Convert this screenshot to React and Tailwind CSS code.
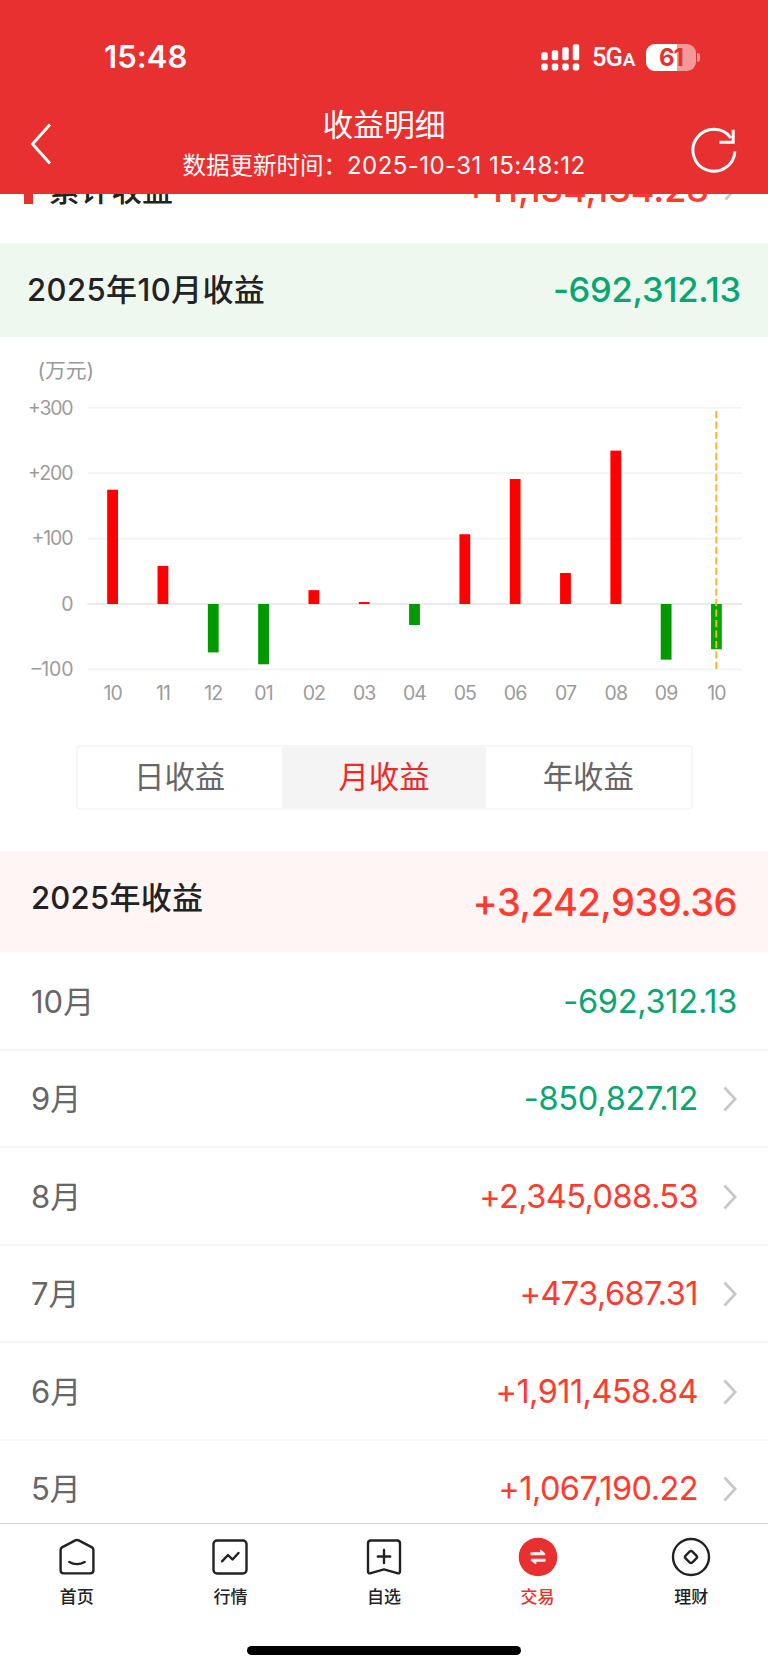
const BARS = [
  { label: '10', value: 174.8 },
  { label: '11', value: 58.2 },
  { label: '12', value: -74 },
  { label: '01', value: -92.2 },
  { label: '02', value: 21.2 },
  { label: '03', value: 3 },
  { label: '04', value: -32.1 },
  { label: '05', value: 106.7 },
  { label: '06', value: 191.1 },
  { label: '07', value: 47.4 },
  { label: '08', value: 234.5 },
  { label: '09', value: -85.1 },
  { label: '10', value: -69.2 },
]

const TICKS = [
  { label: '+300', value: 300, length: 45.5 },
  { label: '+200', value: 200, length: 45.5 },
  { label: '+100', value: 100, length: 42 },
  { label: '0', value: 0, length: 11.5 },
  { label: '–100', value: -100, length: 42 },
]

const MONTHS = [
  { month: '10月', amount: '-692,312.13', link: false },
  { month: '9月', amount: '-850,827.12', link: true },
  { month: '8月', amount: '+2,345,088.53', link: true },
  { month: '7月', amount: '+473,687.31', link: true },
  { month: '6月', amount: '+1,911,458.84', link: true },
  { month: '5月', amount: '+1,067,190.22', link: true },
]

const TABS = ['日收益', '月收益', '年收益']

function Chevron({ className = '' }) {
  return (
    <svg viewBox="0 0 14 26" className={`w-[14px] h-[26px] shrink-0 ${className}`} fill="none" stroke="#c8c8c8" strokeWidth="2.8">
      <path d="M1.5 1.5 L12.2 13 L1.5 24.5" />
    </svg>
  )
}

function StatusBar() {
  return (
    <div className="h-[102px] pt-[40px] pl-[104px] pr-[68px] flex items-start justify-between">
      <span className="text-[31px] leading-[34px] font-semibold tracking-[0.1px]">15:48</span>
      <div className="flex items-center pt-[2px]">
        <svg viewBox="0 0 39 27" className="w-[39px] h-[27px]" fill="#fff">
          <rect x="0.3" y="8.2" width="6.4" height="8" rx="1.8" />
          <rect x="10.8" y="6.2" width="6.4" height="10" rx="1.8" />
          <rect x="21.3" y="3.3" width="6.4" height="12.9" rx="1.8" />
          <rect x="31.8" y="0.2" width="6.4" height="16" rx="1.8" />
          <rect x="0.3" y="19.5" width="6.4" height="6.9" rx="1.8" />
          <rect x="10.8" y="19.5" width="6.4" height="6.9" rx="1.8" />
          <rect x="21.3" y="19.5" width="6.4" height="6.9" rx="1.8" />
          <rect x="31.8" y="19.5" width="6.4" height="6.9" rx="1.8" />
        </svg>
        <span className="ml-[12px] pt-[2px] w-[54px] flex items-baseline font-[Roboto] font-medium leading-[27px]">
          <span className="text-[25.5px] tracking-[-1.1px]">5G</span>
          <span className="ml-[1px] text-[19px] font-semibold">A</span>
        </span>
        <span className="relative w-[50px] h-[27px] rounded-[9px] overflow-hidden bg-white/50 flex items-center justify-center">
          <span className="absolute left-0 top-0 w-[31px] h-full bg-white" />
          <span className="relative text-[24px] leading-[27px] font-bold tracking-[-1px] text-[#e93030]">61</span>
        </span>
        <span className="ml-[1px] w-[3px] h-[9px] rounded-r-full bg-white/50" />
      </div>
    </div>
  )
}

function Header() {
  return (
    <header className="h-[194px] shrink-0 bg-[#e93030] text-white">
      <StatusBar />
      <div className="h-[92px] px-[30px] flex items-start justify-between">
        <div className="w-[48px] pt-[21px]">
          <svg viewBox="0 0 22 42" className="w-[22px] h-[42px]" fill="none" stroke="#fff" strokeWidth="2.9">
            <path d="M20 1.5 L2.5 21 L20 40.5" />
          </svg>
        </div>
        <div className="flex flex-col items-center">
          <h1 className="mt-px text-[30.8px] leading-[44px] font-normal">收益明细</h1>
          <p className="text-[23.5px] leading-[38px] whitespace-nowrap">
            数据更新时间：<span className="text-[24px] tracking-[0.45px]">2025-10-31 15:48:12</span>
          </p>
        </div>
        <svg viewBox="0 0 48 48" className="w-[48px] h-[48px] mt-[24px]" fill="none" stroke="#fff" strokeWidth="3">
          <path d="M44.9 25.5 A21 21 0 1 1 41 12" />
          <path d="M43.2 3.8 V16.3 H29.5" />
        </svg>
      </div>
    </header>
  )
}

function Chart() {
  const zero = 267
  const scale = 0.654
  return (
    <svg viewBox="0 0 768 408" className="block w-[768px] h-[408px] shrink-0">
      <text x="37.5" y="41" fontSize="20.8" fill="#999" textLength="56.5">(万元)</text>
      {TICKS.map((tick) => (
        <g key={tick.label}>
          <line x1="87.5" x2="742" y1={zero - tick.value * scale} y2={zero - tick.value * scale} stroke={tick.value === 0 ? '#ebebeb' : '#f3f3f3'} strokeWidth="1.8" />
          <text x="73.5" y={zero - tick.value * scale + 6.7} fontSize="19.5" fill="#9c9c9c" textAnchor="end" textLength={tick.length}>
            {tick.label}
          </text>
        </g>
      ))}
      {BARS.map((bar, i) => {
        const x = 112.6 + i * 50.32
        const height = Math.abs(bar.value) * scale
        const last = i === BARS.length - 1
        return (
          <g key={i}>
            <rect x={x - 5.4} y={bar.value > 0 ? zero - height : zero} width="10.8" height={height} fill={bar.value > 0 ? '#ff0000' : last ? '#00a800' : '#009900'} />
            <text x={x} y="363" fontSize="19.5" fill="#9c9c9c" textAnchor="middle" letterSpacing="-0.9">
              {bar.label}
            </text>
          </g>
        )
      })}
      <line x1="716.3" x2="716.3" y1="74" y2="333" stroke="#ffb22e" strokeWidth="1.9" strokeDasharray="7.2 3.25" />
    </svg>
  )
}

function HomeIcon() {
  return (
    <>
      <path d="M5 10.4 L18.3 3.4 Q20 2.5 21.7 3.4 L35 10.4 Q36.4 11.2 36.4 13 V33.2 Q36.4 36.4 33.2 36.4 H6.8 Q3.6 36.4 3.6 33.2 V13 Q3.6 11.2 5 10.4 Z" />
      <path d="M12.3 25 Q20 29.2 27.7 25" />
    </>
  )
}

function QuotesIcon() {
  return (
    <>
      <rect x="3.5" y="3.5" width="33" height="33" rx="3.5" />
      <path d="M12 24.3 L18 18 L22.5 22.5 L28.5 16" />
    </>
  )
}

function WatchIcon() {
  return (
    <>
      <path d="M7 3.5 H33 Q36 3.5 36 6.5 V34.2 Q36 37 33.2 36.2 L20 32.4 L6.8 36.2 Q4 37 4 34.2 V6.5 Q4 3.5 7 3.5 Z" />
      <path d="M20 13 V26 M13.8 19.5 H26.2" />
    </>
  )
}

function TradeIcon() {
  return (
    <>
      <circle cx="20" cy="20" r="19.3" fill="#e93030" stroke="none" />
      <path d="M13.2 15.7 H22.6 V13 L26.8 16.4 V17.8 H13.2 Z" fill="#fff" stroke="#fff" strokeWidth="0.8" />
      <path d="M26.8 24.3 H17.9 V27 L13.2 23.6 V22.2 H26.8 Z" fill="#fff" stroke="#fff" strokeWidth="0.8" />
    </>
  )
}

function WealthIcon() {
  return (
    <>
      <circle cx="20" cy="20" r="18" />
      <rect x="15.2" y="15.2" width="9.6" height="9.6" rx="2" transform="rotate(45 20 20)" />
    </>
  )
}

const NAV = [
  { label: '首页', Icon: HomeIcon },
  { label: '行情', Icon: QuotesIcon },
  { label: '自选', Icon: WatchIcon },
  { label: '交易', Icon: TradeIcon, active: true },
  { label: '理财', Icon: WealthIcon },
]

function BottomNav() {
  return (
    <nav className="h-[146px] shrink-0 border-t border-[#d6d6d6] bg-white flex flex-col items-center">
      <div className="w-full pt-[13px] grid grid-cols-5">
        {NAV.map(({ label, Icon, active }) => (
          <div key={label} className="flex flex-col items-center">
            <svg viewBox="0 0 40 40" className="w-[40px] h-[40px]" fill="none" stroke="#222" strokeWidth="2.4" strokeLinecap="round" strokeLinejoin="round">
              <Icon />
            </svg>
            <span className={`mt-[8px] text-[17px] leading-[24px] font-medium ${active ? 'text-[#e93030]' : 'text-[#222]'}`}>{label}</span>
          </div>
        ))}
      </div>
      <div className="mt-[37px] w-[274px] h-[9px] rounded-full bg-black" />
    </nav>
  )
}

function App() {
  return (
    <div className="w-[768px] h-[1669px] overflow-hidden bg-white flex flex-col font-['Inter','Noto_Sans_CJK_SC',sans-serif]">
      <Header />

      {/* total row, scrolled half under the header */}
      <div className="h-[49px] shrink-0 overflow-hidden flex flex-col justify-end">
        <div className="h-[80px] shrink-0 pb-[35px] pl-[24px] pr-[30px] flex items-end">
          <span className="w-[9px] h-[29px] mb-[4px] bg-[#e93030]" />
          <span className="ml-[16px] text-[31px] leading-[36px] font-medium text-[#222]">累计收益</span>
          <span className="ml-auto text-[36px] leading-[38px] font-medium text-[#ff3b30]">+11,134,134.28</span>
          <Chevron className="ml-[15px] mb-[7px]" />
        </div>
      </div>

      <div className="h-[94px] shrink-0 bg-[#eff8ef] pl-[27px] pr-[27px] flex items-center justify-between">
        <h2 className="text-[31px] leading-[44px] font-[450] tracking-[0.4px] text-[#222]">2025年10月收益</h2>
        <span className="text-[34.5px] leading-[44px] font-[450] tracking-[-0.25px] text-[#07a673]">-692,312.13</span>
      </div>

      <Chart />

      <div className="mx-auto w-[617px] h-[65px] shrink-0 border-2 border-[#f6f6f6] rounded-[4px] grid grid-cols-3">
        {TABS.map((tab, i) => (
          <button key={tab} className={`text-[30.4px] leading-[59px] ${i === 1 ? 'bg-[#f4f4f4] text-[#f02828]' : 'text-[#666]'}`}>
            {tab}
          </button>
        ))}
      </div>

      <div className="mt-[41px] h-[101px] shrink-0 bg-[#fff5f4] pl-[31px] pr-[31px] flex items-center justify-between">
        <h2 className="mb-[8px] text-[31px] leading-[44px] font-medium tracking-[0.25px] text-[#222]">2025年收益</h2>
        <span className="text-[38px] leading-[46px] font-[450] tracking-[-0.5px] text-[#ff3b30]">+3,242,939.36</span>
      </div>

      <div className="pt-px h-[571px] shrink-0 overflow-hidden">
        {MONTHS.map((row) => (
          <div key={row.month} className="h-[97.5px] pt-[2px] border-b-2 border-[#f5f5f5] pl-[31px] pr-[31px] flex items-center">
            <span className="text-[31px] leading-[44px] text-[#666]">{row.month}</span>
            <span
              className={`ml-auto text-[32.5px] leading-[44px] ${
                row.amount[0] === '-' ? 'text-[#07a673] tracking-[-0.25px]' : 'text-[#ff3b30] tracking-[-0.55px]'
              }`}
            >
              {row.amount}
            </span>
            {row.link && <Chevron className="ml-[25px]" />}
          </div>
        ))}
      </div>

      <BottomNav />
    </div>
  )
}

export default App
